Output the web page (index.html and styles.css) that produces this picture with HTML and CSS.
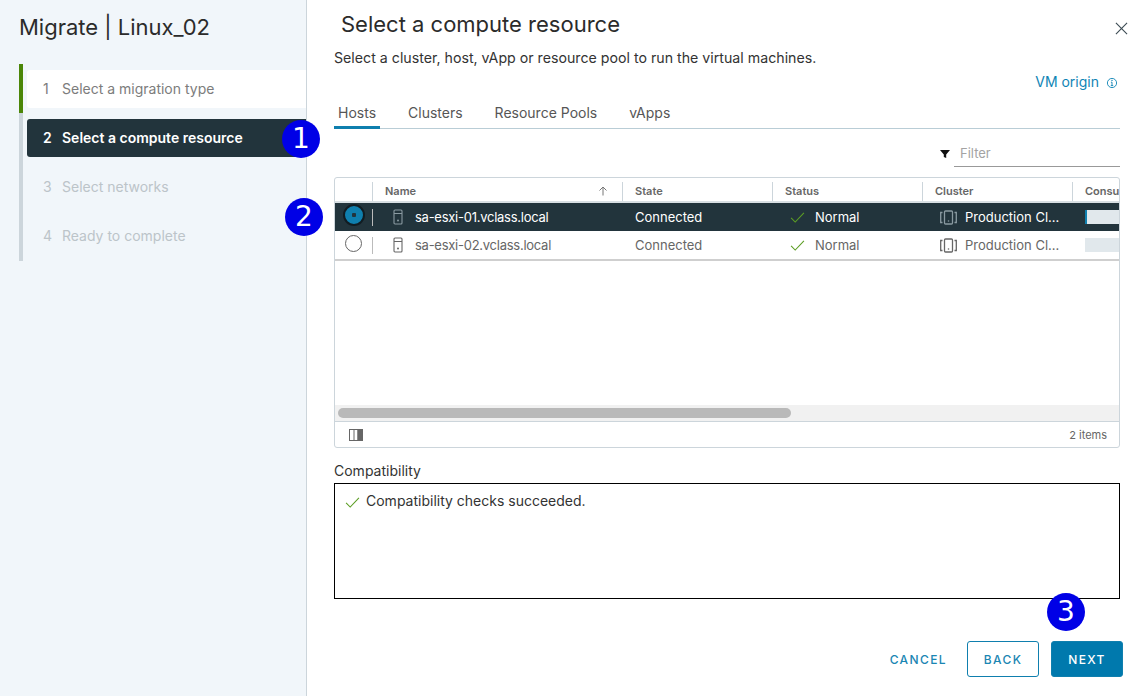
FILE: index.html
```html
<!DOCTYPE html>
<html lang="en">
<head>
  <meta charset="UTF-8">
  <title>Migrate | Linux_02</title>
  <link rel="stylesheet" href="styles.css">
</head>
<body>
  <div class="wizard">
    <aside class="sidebar">
      <h2 class="wizard-title">Migrate | Linux_02</h2>
      <ol class="steps">
        <li class="step done"><span class="num">1</span>Select a migration type</li>
        <li class="step active"><span class="num">2</span>Select a compute resource</li>
        <li class="step"><span class="num">3</span>Select networks</li>
        <li class="step"><span class="num">4</span>Ready to complete</li>
      </ol>
    </aside>

    <main class="content">
      <div class="head">
        <h1>Select a compute resource</h1>
        <svg class="close" viewBox="0 0 14 14"><path d="M1 1l12 12M13 1L1 13"/></svg>
      </div>
      <p class="sub">Select a cluster, host, vApp or resource pool to run the virtual machines.</p>
      <div class="origin">
        <a>VM origin</a>
        <svg class="info" viewBox="0 0 12 12"><circle cx="6" cy="6" r="4.6"/><path d="M6 5.2v3.4M4.8 8.6h2.4M4.9 5.2H6"/><circle class="dot" cx="6" cy="3.4" r=".7"/></svg>
      </div>

      <nav class="tabs">
        <a class="tab on">Hosts</a>
        <a class="tab">Clusters</a>
        <a class="tab">Resource Pools</a>
        <a class="tab">vApps</a>
      </nav>

      <div class="filter-row">
        <svg class="funnel" viewBox="0 0 10 10"><path d="M0 1h10L6.2 5.4V9L3.8 8V5.4z"/></svg>
        <div class="filter">Filter</div>
      </div>

      <section class="grid">
        <div class="row header">
          <div class="cell pick"></div>
          <div class="cell name-head">Name <svg class="sort" viewBox="0 0 10 10"><path d="M5 9.5V1M1.5 4.5L5 1l3.5 3.5"/></svg></div>
          <div class="cell">State</div>
          <div class="cell">Status</div>
          <div class="cell">Cluster</div>
          <div class="cell">Consu</div>
        </div>

        <div class="row selected">
          <div class="cell pick"><span class="radio checked"></span></div>
          <div class="cell"><svg class="host" viewBox="0 0 10 16"><rect x="1" y="1" width="8" height="14" rx="1"/><path d="M1 4.5h8"/><circle class="dot" cx="5" cy="11.5" r="1"/></svg><span class="host-name">sa-esxi-01.vclass.local</span></div>
          <div class="cell">Connected</div>
          <div class="cell status"><svg class="check" viewBox="0 0 16 12"><path d="M1 6.5L5.5 11 15 1"/></svg>Normal</div>
          <div class="cell"><svg class="cluster" viewBox="0 0 17 15"><rect x="4.5" y="1" width="8" height="13" rx="1"/><path d="M2.5 2.5H.7v10h1.8M14.5 2.5h1.8v10h-1.8"/><circle class="dot" cx="8.5" cy="11" r=".8"/></svg>Production Cl...</div>
          <div class="cell"><span class="usage"><i class="used"></i></span></div>
        </div>

        <div class="row">
          <div class="cell pick"><span class="radio"></span></div>
          <div class="cell"><svg class="host" viewBox="0 0 10 16"><rect x="1" y="1" width="8" height="14" rx="1"/><path d="M1 4.5h8"/><circle class="dot" cx="5" cy="11.5" r="1"/></svg><span class="host-name">sa-esxi-02.vclass.local</span></div>
          <div class="cell">Connected</div>
          <div class="cell status"><svg class="check" viewBox="0 0 16 12"><path d="M1 6.5L5.5 11 15 1"/></svg>Normal</div>
          <div class="cell"><svg class="cluster" viewBox="0 0 17 15"><rect x="4.5" y="1" width="8" height="13" rx="1"/><path d="M2.5 2.5H.7v10h1.8M14.5 2.5h1.8v10h-1.8"/><circle class="dot" cx="8.5" cy="11" r=".8"/></svg>Production Cl...</div>
          <div class="cell"><span class="usage"></span></div>
        </div>

        <div class="spacer"></div>
        <div class="scrollbar"><div class="thumb"></div></div>
        <div class="grid-foot">
          <svg class="columns" viewBox="0 0 14 12"><rect x=".5" y=".5" width="13" height="11"/><path d="M5 .5v11M9 .5v11"/><rect class="fill" x="9" y=".5" width="4.5" height="11"/></svg>
          <span>2 items</span>
        </div>
      </section>

      <div class="compat-label">Compatibility</div>
      <div class="compat"><svg class="check" viewBox="0 0 16 12"><path d="M1 6.5L5.5 11 15 1"/></svg>Compatibility checks succeeded.</div>

      <footer class="actions">
        <button class="btn link">CANCEL</button>
        <button class="btn outline">BACK</button>
        <button class="btn solid">NEXT</button>
      </footer>
    </main>

    <span class="callout c1">1</span>
    <span class="callout c2">2</span>
    <span class="callout c3">3</span>
  </div>
</body>
</html>
```

FILE: styles.css
```css
* { box-sizing: border-box; }
html, body {
  margin: 0;
  height: 100%;
}
body {
  font-family: Inter, 'Open Sans', sans-serif;
  font-size: 13px;
  color: #565656;
  background: #fff;
  overflow: hidden;
}
.wizard {
  position: relative;
  display: flex;
  width: 1141px;
  height: 696px;
  overflow: hidden;
}

/* left side */
.sidebar {
  width: 307px;
  flex: none;
  background: #f1f6fa;
  border-right: 1px solid #ccd5db;
  padding: 13px 0 0 19px;
}
.wizard-title {
  margin: 0 0 22px;
  font-size: 22px;
  line-height: 29px;
  font-weight: 400;
  color: #2b2b2b;
}
.steps {
  list-style: none;
  margin: 0;
  padding: 6px 0 6px 4px;
  display: flex;
  flex-direction: column;
  gap: 11px;
  border-left: 4px solid #ccd5db;
  position: relative;
  font-size: 14px;
}
.steps::before {
  content: '';
  position: absolute;
  left: -4px;
  top: 0;
  width: 4px;
  height: 49px;
  background: #4b8608;
}
.step {
  height: 38px;
  display: flex;
  align-items: center;
  padding: 0 0 2px 16px;
  color: #bcc4c9;
  border-radius: 3px 0 0 3px;
}
.num { width: 19px; }
.step.done {
  background: #fff;
  color: #7c7c7c;
}
.step.active {
  background: #22343c;
  color: #fff;
  font-weight: 600;
}

/* right side */
.content {
  flex: 1;
  padding: 0 21px 0 27px;
  min-width: 0;
}
.head {
  display: flex;
  justify-content: space-between;
  align-items: center;
  height: 48px;
  margin-bottom: 1px;
  padding-left: 7px;
}
.head h1 {
  margin: 0;
  font-size: 22px;
  font-weight: 400;
  color: #2b2b2b;
}
.close {
  width: 13px;
  height: 13px;
  margin: 8px -8px 0 0;
  fill: none;
  stroke: #3d4c54;
  stroke-width: 1.2;
}
.sub {
  margin: 0;
  font-size: 14.2px;
  line-height: 18px;
  color: #333;
}
.origin {
  display: flex;
  justify-content: flex-end;
  align-items: center;
  gap: 7px;
  height: 20px;
  margin-top: 4px;
  font-size: 14px;
  color: #0f84b5;
}
.info {
  width: 12px;
  height: 12px;
  margin: 3px 2px 0 0;
  fill: none;
  stroke: #0f84b5;
  stroke-width: .9;
}
.info .dot { fill: #0f84b5; stroke: none; }

.tabs {
  display: flex;
  gap: 24px;
  height: 32px;
  margin-top: 6px;
  border-bottom: 1px solid #b9cdd6;
  padding-top: 6px;
  font-size: 14px;
}
.tab {
  padding: 0 4px;
  height: 26px;
  line-height: 20px;
  color: #565656;
}
.tab.on {
  border-bottom: 3px solid #0f7fae;
}

.filter-row {
  display: flex;
  justify-content: flex-end;
  align-items: center;
  height: 38px;
  margin-top: 6px;
}
.funnel {
  width: 10px;
  height: 10px;
  margin-right: 4px;
  fill: #111;
}
.filter {
  width: 166px;
  height: 26px;
  line-height: 24px;
  padding-left: 6px;
  color: #a3a3a3;
  border-bottom: 1px solid #999;
}

.grid {
  height: 271px;
  margin-top: 4px;
  border: 1px solid #ccd5db;
  border-radius: 3px;
  display: flex;
  flex-direction: column;
  overflow: hidden;
}
.row {
  display: grid;
  grid-template-columns: 37px 250px 150px 150px 150px 1fr;
  flex: none;
  height: 28px;
  align-items: center;
  color: #666;
}
.row.header {
  height: 25px;
  padding-top: 3px;
  font-size: 11px;
  font-weight: 600;
  color: #666;
  border-bottom: 2px solid #d8dfe3;
}
.row.header .cell {
  border-left: 1px solid #ccd5db;
  height: 19px;
  padding-left: 12px;
}
.row.header .pick { border-left: 0; }
.row + .row + .row { border-bottom: 2px solid #cfcfcf; height: 30px; }
.row.selected {
  background: #22343c;
  color: #fff;
}
.cell {
  display: flex;
  align-items: center;
  padding-left: 13px;
  white-space: nowrap;
  overflow: hidden;
}
.row.header .name-head { justify-content: space-between; padding-right: 14px; }
.sort {
  width: 10px;
  height: 10px;
  fill: none;
  stroke: #777;
  stroke-width: 1;
}
.row .pick {
  padding-left: 10px;
  height: 100%;
  position: relative;
  overflow: visible;
}
.row:not(.header) .pick::after {
  content: '';
  position: absolute;
  right: -1px;
  top: 6px;
  height: 17px;
  border-right: 1px solid #bbb;
}
.radio {
  width: 17px;
  height: 17px;
  margin-top: -4px;
  border-radius: 50%;
  background: #fff;
  border: 1px solid #666;
}
.radio.checked {
  width: 22px;
  height: 22px;
  margin-left: -2px;
  border: 2px solid #111c22;
  background: radial-gradient(circle, #22343c 0 2px, #0f7fae 2.5px);
}
.host {
  width: 10px;
  height: 16px;
  margin: 0 12px 0 8px;
  fill: none;
  stroke: #8a9aa1;
  stroke-width: 1.1;
}
.host-name { letter-spacing: -.26px; }
.row .dot { fill: #8a9aa1; stroke: none; }
.row:not(.selected) .host, .row:not(.selected) .cluster { stroke: #666; }
.row:not(.selected) .dot { fill: #666; }
.check {
  width: 15px;
  height: 11px;
  fill: none;
  stroke: #5c9e24;
  stroke-width: 1.2;
}
.row .status { padding-left: 18px; }
.status .check { margin-right: 10px; }
.cluster {
  width: 17px;
  height: 15px;
  margin: 0 8px 0 5px;
  fill: none;
  stroke: #8a9aa1;
  stroke-width: 1.3;
}
.usage {
  display: block;
  width: 100%;
  height: 14px;
  background: #e1e8ec;
}
.usage .used {
  display: block;
  width: 2px;
  height: 14px;
  background: #0f7fae;
}
.spacer { flex: 1; }
.scrollbar {
  height: 17px;
  flex: none;
  background: #f1f1f1;
  padding: 3px;
  border-bottom: 1px solid #ccd5db;
}
.thumb {
  width: 453px;
  height: 10px;
  border-radius: 5px;
  background: #b9b9b9;
}
.grid-foot {
  height: 25px;
  flex: none;
  display: flex;
  justify-content: space-between;
  align-items: center;
  padding: 1px 12px 0 14px;
  font-size: 11px;
  color: #666;
}
.columns {
  width: 14px;
  height: 12px;
  fill: none;
  stroke: #666;
}
.columns .fill { fill: #666; }

.compat-label {
  margin-top: 14px;
  font-size: 14px;
  line-height: 18px;
  color: #333;
}
.compat {
  height: 116px;
  margin-top: 3px;
  border: 1px solid #000;
  padding: 8px 10px;
  display: flex;
  align-items: flex-start;
  gap: 6px;
  font-size: 14px;
  line-height: 17px;
  color: #333;
}
.compat .check { margin-top: 5px; flex: none; }

.actions {
  display: flex;
  justify-content: flex-end;
  align-items: center;
  gap: 12px;
  margin: 42px -3px 0 0;
}
.btn {
  height: 36px;
  width: 72px;
  font-family: inherit;
  font-size: 12px;
  font-weight: 500;
  letter-spacing: 1.4px;
  border-radius: 3px;
  border: 1px solid #0f7fae;
  cursor: pointer;
}
.btn.link {
  width: auto;
  border: 0;
  margin-right: 8px;
  background: none;
  color: #1a86b3;
  padding: 0;
}
.btn.outline {
  background: #fff;
  color: #1a86b3;
}
.btn.solid {
  background: #0079ad;
  color: #fff;
}

/* numbered markers drawn over the screenshot */
.callout {
  position: absolute;
  width: 38px;
  height: 38px;
  border-radius: 50%;
  background: #0000e6;
  color: #fff;
  font-family: 'DejaVu Sans', sans-serif;
  font-size: 28px;
  line-height: 38px;
  text-align: center;
}
.c1 { left: 282px; top: 120px; }
.c2 { left: 285px; top: 198px; }
.c3 { left: 1047px; top: 593px; }
```
